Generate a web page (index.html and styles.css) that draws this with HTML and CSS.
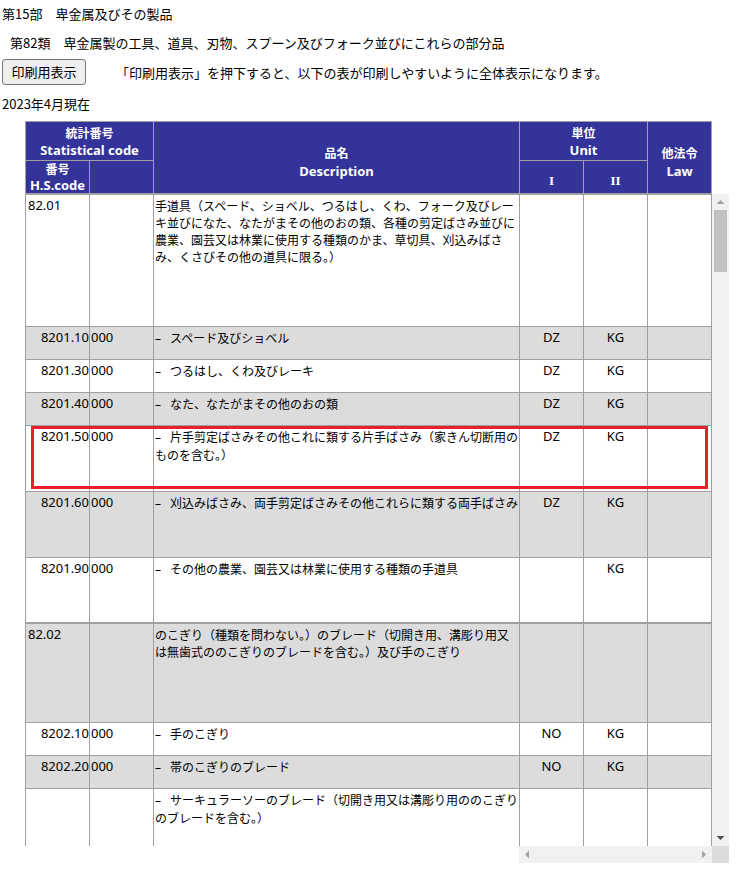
FILE: index.html
```html
<!DOCTYPE html>
<html lang="ja">
<head>
<meta charset="utf-8">
<title>第82類</title>
<link rel="stylesheet" href="styles.css">
</head>
<body>
<div class="page">
  <p class="part">第15部　卑金属及びその製品</p>
  <p class="chapter">第82類　卑金属製の工具、道具、刃物、スプーン及びフォーク並びにこれらの部分品</p>
  <div class="print-row">
    <button class="print-btn" type="button">印刷用表示</button>
    <span class="print-note">「印刷用表示」を押下すると、以下の表が印刷しやすいように全体表示になります。</span>
  </div>
  <p class="asof">2023年4月現在</p>

  <div class="tariff">
    <div class="thead">
      <div class="hc h-stat">統計番号<br><span class="en">Statistical code</span></div>
      <div class="hc h-desc">品名<br><span class="en">Description</span></div>
      <div class="hc h-unit">単位<br><span class="en">Unit</span></div>
      <div class="hc h-law">他法令<br><span class="en">Law</span></div>
      <div class="hc h-hs">番号<br><span class="en">H.S.code</span></div>
      <div class="hc h-blank"></div>
      <div class="hc h-u1"><span class="roman">I</span></div>
      <div class="hc h-u2"><span class="roman">II</span></div>
    </div>

    <div class="tbody">
      <div class="tbody-main">
        <div class="rows">
          <div class="row heading h133">
            <div class="c code-head">82.01</div>
            <div class="c"></div>
            <div class="c desc">手道具（スペード、ショベル、つるはし、くわ、フォーク及びレーキ並びになた、なたがまその他のおの類、各種の剪定ばさみ並びに農業、園芸又は林業に使用する種類のかま、草切具、刈込みばさみ、くさびその他の道具に限る。）</div>
            <div class="c"></div><div class="c"></div><div class="c"></div>
          </div>
          <div class="row shade h33">
            <div class="c code">8201.10</div>
            <div class="c sub">000</div>
            <div class="c desc"><span class="dash">–</span>スペード及びショベル</div>
            <div class="c unit">DZ</div><div class="c unit">KG</div><div class="c"></div>
          </div>
          <div class="row h33">
            <div class="c code">8201.30</div>
            <div class="c sub">000</div>
            <div class="c desc"><span class="dash">–</span>つるはし、くわ及びレーキ</div>
            <div class="c unit">DZ</div><div class="c unit">KG</div><div class="c"></div>
          </div>
          <div class="row shade h33">
            <div class="c code">8201.40</div>
            <div class="c sub">000</div>
            <div class="c desc"><span class="dash">–</span>なた、なたがまその他のおの類</div>
            <div class="c unit">DZ</div><div class="c unit">KG</div><div class="c"></div>
          </div>
          <div class="row h66">
            <div class="c code">8201.50</div>
            <div class="c sub">000</div>
            <div class="c desc"><span class="dash">–</span>片手剪定ばさみその他これに類する片手ばさみ（家きん切断用のものを含む。）</div>
            <div class="c unit">DZ</div><div class="c unit">KG</div><div class="c"></div>
          </div>
          <div class="row shade h66">
            <div class="c code">8201.60</div>
            <div class="c sub">000</div>
            <div class="c desc"><span class="dash">–</span>刈込みばさみ、両手剪定ばさみその他これらに類する両手ばさみ</div>
            <div class="c unit">DZ</div><div class="c unit">KG</div><div class="c"></div>
          </div>
          <div class="row h65">
            <div class="c code">8201.90</div>
            <div class="c sub">000</div>
            <div class="c desc"><span class="dash">–</span>その他の農業、園芸又は林業に使用する種類の手道具</div>
            <div class="c unit"></div><div class="c unit">KG</div><div class="c"></div>
          </div>
          <div class="row heading shade h100">
            <div class="c code-head">82.02</div>
            <div class="c"></div>
            <div class="c desc">のこぎり（種類を問わない。）のブレード（切開き用、溝彫り用又は無歯式ののこぎりのブレードを含む。）及び手のこぎり</div>
            <div class="c"></div><div class="c"></div><div class="c"></div>
          </div>
          <div class="row h33">
            <div class="c code">8202.10</div>
            <div class="c sub">000</div>
            <div class="c desc"><span class="dash">–</span>手のこぎり</div>
            <div class="c unit">NO</div><div class="c unit">KG</div><div class="c"></div>
          </div>
          <div class="row shade h33">
            <div class="c code">8202.20</div>
            <div class="c sub">000</div>
            <div class="c desc"><span class="dash">–</span>帯のこぎりのブレード</div>
            <div class="c unit">NO</div><div class="c unit">KG</div><div class="c"></div>
          </div>
          <div class="row h99">
            <div class="c code"></div>
            <div class="c sub"></div>
            <div class="c desc"><span class="dash">–</span>サーキュラーソーのブレード（切開き用又は溝彫り用ののこぎりのブレードを含む。）</div>
            <div class="c"></div><div class="c"></div><div class="c"></div>
          </div>
          <div class="highlight"></div>
        </div>
        <div class="vscroll">
          <div class="sb-btn"><svg width="17" height="16" viewBox="0 0 17 16"><polygon points="4.5,10 12.5,10 8.5,6" fill="#a3a3a3"/></svg></div>
          <div class="sb-track-v"><div class="sb-thumb-v"></div></div>
          <div class="sb-btn"><svg width="17" height="16" viewBox="0 0 17 16"><polygon points="4.5,6 12.5,6 8.5,10" fill="#505050"/></svg></div>
        </div>
      </div>
      <div class="hscroll-row">
        <div class="hs-spacer"></div>
        <div class="hscroll">
          <div class="sb-btn-h"><svg width="16" height="17" viewBox="0 0 16 17"><polygon points="10,4.5 10,12.5 6,8.5" fill="#a3a3a3"/></svg></div>
          <div class="sb-track-h"></div>
          <div class="sb-btn-h"><svg width="16" height="17" viewBox="0 0 16 17"><polygon points="6,4.5 6,12.5 10,8.5" fill="#a3a3a3"/></svg></div>
        </div>
        <div class="corner"></div>
      </div>
    </div>
  </div>
</div>
</body>
</html>
```

FILE: styles.css
```css
html, body {
  margin: 0;
  padding: 0;
  background: #ffffff;
}

body {
  font-family: "Noto Sans CJK JP", "Noto Sans", sans-serif;
  color: #000000;
}

.page {
  padding-left: 2px;
}

.part {
  margin: 0;
  padding-top: 4px;
  font-size: 13px;
  line-height: 19px;
}

.chapter {
  margin: 10px 0 0;
  padding-left: 8px;
  font-size: 13px;
  line-height: 19px;
}

.print-row {
  margin-top: 7px;
  display: flex;
  align-items: center;
  height: 26px;
}

.print-btn {
  box-sizing: border-box;
  width: 84px;
  height: 26px;
  padding: 0;
  border: 1px solid #767676;
  border-radius: 3px;
  background: #efefef;
  color: #000;
  font-family: "Noto Sans CJK JP", sans-serif;
  font-size: 13px;
  line-height: 22px;
}

.print-note {
  margin-left: 30px;
  font-size: 13px;
  line-height: 19px;
}

.asof {
  margin: 9px 0 0;
  font-size: 13px;
  line-height: 19px;
}

/* ---------- table ---------- */
.tariff {
  margin-top: 8px;
  margin-left: 23px;
  width: 704px;
}

.thead {
  box-sizing: border-box;
  width: 687px;
  display: grid;
  grid-template-columns: 63px 63px 365px 63px 63px 63px;
  grid-template-rows: 38px 32px;
  gap: 1px;
  background: #a0a0a0;
  border: 1px solid #a0a0a0;
}

.hc {
  background: #333399;
  color: #ffffff;
  font-weight: bold;
  font-size: 12px;
  line-height: 17px;
  text-align: center;
}

.hc .en {
  font-family: "Noto Sans", sans-serif;
  font-size: 13px;
}

.hc .roman {
  font-family: "Liberation Serif", serif;
  font-size: 13px;
}

.h-stat { grid-column: 1 / 3; grid-row: 1; padding-top: 2px; }
.h-desc { grid-column: 3; grid-row: 1 / 3; padding-top: 22px; line-height: 18px; }
.h-unit { grid-column: 4 / 6; grid-row: 1; padding-top: 2px; }
.h-law  { grid-column: 6; grid-row: 1 / 3; padding-top: 22px; line-height: 18px; }
.h-hs   { grid-column: 1; grid-row: 2; line-height: 16px; }
.h-blank{ grid-column: 2; grid-row: 2; }
.h-u1   { grid-column: 4; grid-row: 2; padding-top: 10px; }
.h-u2   { grid-column: 5; grid-row: 2; padding-top: 10px; }

.tbody-main {
  display: flex;
  height: 652px;
}

.rows {
  position: relative;
  width: 687px;
  height: 652px;
  overflow: hidden;
}

.row {
  box-sizing: border-box;
  display: grid;
  grid-template-columns: 63px 63px 365px 63px 63px 63px;
  column-gap: 1px;
  background: #a0a0a0;
  border-left: 1px solid #a0a0a0;
  border-right: 1px solid #a0a0a0;
  border-bottom: 1px solid #a0a0a0;
}

.row.heading { border-top: 1px solid #a0a0a0; }

.h33 { height: 33px; }
.h65 { height: 65px; }
.h66 { height: 66px; }
.h99 { height: 99px; }
.h100 { height: 100px; }
.h133 { height: 133px; }

.c {
  background: #ffffff;
  padding: 2px 1px;
  font-size: 12px;
  line-height: 17px;
  overflow: hidden;
}

.row.shade .c { background: #dcdcdc; }

.code, .code-head, .sub, .unit {
  font-family: "Noto Sans", sans-serif;
  font-size: 13px;
}

.code-head { padding-left: 2px; }
.code { text-align: right; padding-right: 0; }
.sub { text-align: left; }
.unit { text-align: center; }

.desc {
  font-family: "Noto Sans CJK JP", sans-serif;
  line-break: normal;
}

.dash {
  display: inline-block;
  width: 15px;
  font-family: "Noto Sans", sans-serif;
}

.highlight {
  position: absolute;
  left: 6px;
  top: 232px;
  width: 677px;
  height: 63px;
  box-sizing: border-box;
  border: 3px solid #e8202a;
}

/* ---------- scrollbars ---------- */
.vscroll {
  width: 17px;
  height: 652px;
  background: #f1f1f1;
  display: flex;
  flex-direction: column;
}

.sb-btn {
  height: 16px;
  flex: none;
}

.sb-btn svg, .sb-btn-h svg { display: block; }

.sb-track-v {
  flex: 1;
}

.sb-thumb-v {
  margin: 0 2px;
  height: 62px;
  background: #c1c1c1;
}

.hscroll-row {
  display: flex;
  height: 17px;
}

.hs-spacer {
  width: 494px;
  background: #ffffff;
}

.hscroll {
  width: 193px;
  background: #f1f1f1;
  display: flex;
}

.sb-btn-h {
  width: 16px;
  flex: none;
}

.sb-track-h { flex: 1; }

.corner {
  width: 17px;
  background: #dcdcdc;
}
```
